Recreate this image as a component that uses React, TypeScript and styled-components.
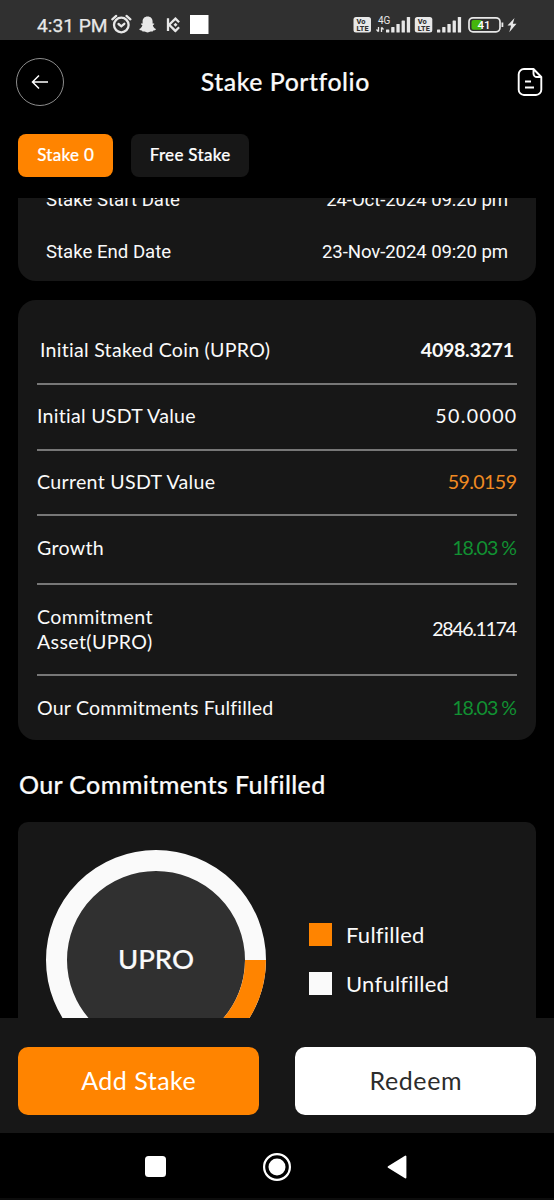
import React from "react";
import styled, { createGlobalStyle } from "styled-components";

const GlobalStyle = createGlobalStyle`
  * { box-sizing: border-box; }
  body { margin: 0; background: #000; }
`;

const geometric = `Lato, "Open Sans", sans-serif`;

const Screen = styled.div`
  width: 554px;
  height: 1200px;
  display: flex;
  flex-direction: column;
  overflow: hidden;
  background: #000;
  color: #fafafa;
  font-family: ${geometric};
`;

const Label = styled.span<{ $size?: number; $weight?: number; $track?: number; $color?: string }>`
  font-size: ${(p) => p.$size ?? 19.6}px;
  font-weight: ${(p) => p.$weight ?? 400};
  letter-spacing: ${(p) => p.$track ?? 0}px;
  margin-right: ${(p) => -Math.min(p.$track ?? 0, 0.6)}px;
  color: ${(p) => p.$color ?? "inherit"};
  -webkit-text-stroke: ${(p) => (p.$weight === 500 ? "0.2px currentColor" : "0")};
  line-height: 25px;
  white-space: pre;
`;

const StatusBar = styled.div`
  flex: none;
  height: 40px;
  padding: 8px 36px 0 37px;
  display: flex;
  align-items: center;
  justify-content: space-between;
  background: #303030;
`;

const StatusGroup = styled.div`
  display: flex;
  align-items: center;
`;

const Clock = styled.span`
  width: 73px;
  font: 400 19.2px/24px Roboto, sans-serif;
  -webkit-text-stroke: 0.25px currentColor;
  color: #e8e8e8;
  white-space: nowrap;
  padding-top: 3px;
`;

const Header = styled.header`
  flex: none;
  height: 84px;
  padding: 0 11px 0 16px;
  display: flex;
  align-items: center;
  justify-content: space-between;
`;

const BackButton = styled.button`
  width: 48px;
  height: 48px;
  padding: 0;
  display: grid;
  place-items: center;
  border: 1px solid #8c8c8c;
  border-radius: 50%;
  background: none;
`;

const Title = styled.h1`
  margin: 0;
  padding: 0 11px 2px 0;
  font-size: 25px;
  line-height: 25px;
`;

const Tabs = styled.nav`
  flex: none;
  height: 74px;
  padding: 10px 18px 0;
  display: flex;
  gap: 18px;
`;

const Tab = styled.button<{ $active?: boolean; $width: number }>`
  width: ${(p) => p.$width}px;
  height: 43px;
  padding: 0 0 2px;
  border: 0;
  border-radius: 8px;
  background: ${(p) => (p.$active ? "#ff8400" : "#171717")};
  color: #fff;
  font-family: inherit;
`;

const ScrollArea = styled.main`
  flex: none;
  height: 820px;
  overflow: hidden;
`;

const Content = styled.div`
  margin-top: -25px;
  padding: 0 18px;
`;

const DateCard = styled.section`
  height: 108px;
  padding: 0 28px;
  border-radius: 0 0 18px 18px;
  background: #171717;
`;

const DateRow = styled.div`
  height: 52px;
  padding-top: 1px;
  display: flex;
  align-items: center;
  justify-content: space-between;
  font: 400 18.6px/24px Roboto, sans-serif;
`;

const DateValue = styled.span`
  letter-spacing: -0.1px;
`;

const SummaryCard = styled.section`
  height: 440px;
  margin-top: 19px;
  padding: 18px 19px 0;
  border-radius: 18px;
  background: #171717;
`;

const SummaryRow = styled.div<{ $height: number; $inset?: boolean; $last?: boolean; $lift?: number }>`
  height: ${(p) => p.$height}px;
  padding: 0 ${(p) => (p.$inset ? 3 : 0)}px ${(p) => p.$lift ?? 2}px;
  display: flex;
  align-items: center;
  justify-content: space-between;
  border-bottom: ${(p) => (p.$last ? "0" : "2px solid #777")};
`;

const SectionTitle = styled.h2`
  margin: 32px 0 25px 1px;
  font-size: 25px;
  line-height: 25px;
  height: 25px;
`;

const ChartCard = styled.section`
  height: 276px;
  padding: 28px;
  display: flex;
  gap: 43px;
  border-radius: 10px;
  background: #171717;
`;

const Donut = styled.div`
  width: 220px;
  height: 220px;
  display: grid;
  place-items: center;
  > * { grid-area: 1 / 1; }
`;

const DonutName = styled.div`
  padding-bottom: 3px;
`;

const Legend = styled.div`
  padding-top: 72px;
  display: flex;
  flex-direction: column;
  gap: 24px;
`;

const LegendItem = styled.div`
  height: 25px;
  display: flex;
  align-items: center;
  gap: 14px;
`;

const Swatch = styled.i<{ $color: string }>`
  width: 23px;
  height: 23px;
  background: ${(p) => p.$color};
`;

const ActionBar = styled.div`
  flex: none;
  height: 115px;
  padding: 29px 18px 0;
  display: flex;
  gap: 36px;
  background: #171717;
`;

const Action = styled.button<{ $light?: boolean }>`
  flex: 1;
  height: 68px;
  padding: 0 0 1px;
  border: 0;
  border-radius: 10px;
  font-family: inherit;
  background: ${(p) => (p.$light ? "#fff" : "#ff8400")};
  color: ${(p) => (p.$light ? "#2c2c2c" : "#fff")};
`;

const SystemNav = styled.div`
  flex: 1;
  padding: 2px 147px 0 145px;
  display: flex;
  align-items: center;
  justify-content: space-between;
  border-bottom: 2px solid #0c0c0c;
`;

const LeftStatusIcons = () => (
  <svg width="100" height="32" viewBox="110 8 100 32" fill="none">
    <g stroke="#e8e8e8" strokeWidth="2.300" strokeLinecap="round">
      <circle cx="121.300" cy="25" r="7.300" />
      <path d="M118.500 24l2.800 2.300 3-2.500M112.300 19.300l3.900-3.400M130.400 19.300l-3.900-3.400" />
    </g>
    <path
      fill="#e8e8e8"
      d="M147.600 16.600c3.300 0 5 2.300 5 5v2l1.500-.2c.5.600 0 1.100-1.300 1.800.5 2 1.500 3 3.200 3.800-.2 1-1.400 1.400-2.800 1.600l-.5 1-2-.1c-1.200.1-1.700 1-3.100 1s-1.900-.9-3.100-1l-2 .1-.5-1c-1.400-.2-2.600-.6-2.800-1.600 1.700-.8 2.700-1.800 3.200-3.800-1.300-.7-1.800-1.200-1.300-1.800l1.500.2v-2c0-2.700 1.700-5 5-5z"
    />
    <g stroke="#e8e8e8" strokeWidth="2.300">
      <path d="M168 18.300v12.800M175.500 18.500l-6.300 6.300 6.300 6.300M172.300 21.700l3.200-3 3.600 3.600M172.300 27.900l3.200 3 3.600-3.600" />
    </g>
    <path fill="#e8e8e8" d="M175.500 22.800l2 2-2 2-2-2z" />
    <path fill="#fff" d="M190 15h18.500v19h-18.500z" />
  </svg>
);

const iconFont = { fontFamily: "Roboto, sans-serif" };

const VoLte = ({ x }: { x: number }) => (
  <g>
    <rect x={x} y="17" width="17.500" height="15.500" rx="2.500" fill="#e8e8e8" />
    <g fill="#303030" fontWeight="800" {...iconFont}>
      <text x={x + 3} y="24.300" fontSize="7.500">Vo</text>
      <text x={x + 3} y="31.300" fontSize="7.300" textLength="12">LTE</text>
    </g>
  </g>
);

const Signal = ({ x }: { x: number }) => (
  <g fill="#e8e8e8">
    {[3, 5.5, 8.5, 12, 15.5].map((h, i) => (
      <rect key={h} x={x + i * 5.2} y={32.5 - h} width="3.300" height={h} rx="0.600" />
    ))}
  </g>
);

const RightStatusIcons = () => (
  <svg width="165" height="32" viewBox="353 8 165 32">
    <VoLte x={353.5} />
    <text x="378" y="23.500" fontSize="10" fill="#e8e8e8" {...iconFont}>4G</text>
    <path d="M378.500 27v4.500M376.500 29.500l2 2.200M381.500 32v-4.500M383.500 29.500l-2-2.200" stroke="#e8e8e8" strokeWidth="1.300" fill="none" />
    <Signal x={386} />
    <VoLte x={414.8} />
    <Signal x={437} />
    <rect x="469" y="17.800" width="31" height="14" rx="4" fill="none" stroke="#e8e8e8" strokeWidth="1.700" />
    <path d="M473.500 20h8v9.800h-8a2 2 0 0 1-2-2V22a2 2 0 0 1 2-2z" fill="#45b50c" />
    <path d="M501.500 22.500h1.800v4.500h-1.800z" fill="#e8e8e8" />
    <text x="484" y="28.900" fontSize="11.500" fontWeight="500" textAnchor="middle" fill="#fff" {...iconFont}>41</text>
    <path d="M514.500 18l-7 7.500h3.600l-1.800 6.800 7.200-8.600h-3.700z" fill="#e8e8e8" />
  </svg>
);

const rows = [
  { label: "Initial Staked Coin (UPRO)", lt: 0.26, value: "4098.3271", vt: -0.3, weight: 700, height: 67, inset: true },
  { label: "Initial USDT Value", lt: 0.26, value: "50.0000", vt: 1.35, height: 66, lift: 3 },
  { label: "Current USDT Value", lt: 0.3, value: "59.0159", vt: -0.6, color: "#ef8a22", height: 65 },
  { label: "Growth", lt: 0.3, value: "18.03 %", vt: -1, color: "#119132", height: 69, lift: 5 },
  { label: "Commitment\nAsset(UPRO)", lt: 0.36, value: "2846.1174", vt: -1.35, height: 91 },
  { label: "Our Commitments Fulfilled", lt: 0.18, value: "18.03 %", vt: -1, color: "#119132", height: 63, lift: 0 },
];

export default function App() {
  return (
    <Screen>
      <GlobalStyle />
      <StatusBar>
        <StatusGroup>
          <Clock>4:31 PM</Clock>
          <LeftStatusIcons />
        </StatusGroup>
        <RightStatusIcons />
      </StatusBar>
      <Header>
        <BackButton aria-label="Back">
          <svg width="18" height="16" viewBox="0 0 18 16" fill="none" stroke="#fff" strokeWidth="1.500">
            <path d="M17 8H1.500M8 1.500L1.500 8 8 14.500" />
          </svg>
        </BackButton>
        <Title>
          <Label $size={24.8} $weight={500} $track={0.55}>Stake Portfolio</Label>
        </Title>
        <svg width="26" height="30" viewBox="0 0 26 30" fill="none" stroke="#fff" strokeWidth="1.900" strokeLinejoin="round">
          <path d="M16.500 2H7a5.300 5.300 0 0 0-5.300 5.300v15.400A5.300 5.300 0 0 0 7 28h12a5.300 5.300 0 0 0 5.300-5.300V10zM16.500 2v4.500A3.500 3.500 0 0 0 20 10h4.300M8 14.500h6M8 20.500h9" />
        </svg>
      </Header>
      <Tabs>
        <Tab $active $width={95}>
          <Label $size={17} $weight={500} $track={0.3}>Stake 0</Label>
        </Tab>
        <Tab $width={118}>
          <Label $size={17} $weight={500} $track={0.3}>Free Stake</Label>
        </Tab>
      </Tabs>
      <ScrollArea>
        <Content>
          <DateCard>
            <DateRow>
              <span>Stake Start Date</span>
              <DateValue>24-Oct-2024 09:20 pm</DateValue>
            </DateRow>
            <DateRow>
              <span>Stake End Date</span>
              <DateValue>23-Nov-2024 09:20 pm</DateValue>
            </DateRow>
          </DateCard>
          <SummaryCard>
            {rows.map((r, i) => (
              <SummaryRow
                key={r.label}
                $height={r.height}
                $inset={r.inset}
                $lift={r.lift}
                $last={i === rows.length - 1}
              >
                <Label $track={r.lt}>{r.label}</Label>
                <Label $track={r.vt} $weight={r.weight} $color={r.color}>{r.value}</Label>
              </SummaryRow>
            ))}
          </SummaryCard>
          <SectionTitle>
            <Label $size={25} $weight={500} $track={0.38}>Our Commitments Fulfilled</Label>
          </SectionTitle>
          <ChartCard>
            <Donut>
              <svg width="220" height="220" viewBox="-110 -110 220 220">
                <circle r="99.500" fill="#303030" stroke="#fafafa" strokeWidth="21" />
                <path d="M99.500 0A99.500 99.500 0 0 1 42.160 90.130" fill="none" stroke="#ff8400" strokeWidth="21" />
              </svg>
              <DonutName>
                <Label $size={27.5} $weight={500}>UPRO</Label>
              </DonutName>
            </Donut>
            <Legend>
              <LegendItem>
                <Swatch $color="#ff8400" />
                <Label $size={22} $track={0.25}>Fulfilled</Label>
              </LegendItem>
              <LegendItem>
                <Swatch $color="#fafafa" />
                <Label $size={22} $track={0.25}>Unfulfilled</Label>
              </LegendItem>
            </Legend>
          </ChartCard>
        </Content>
      </ScrollArea>
      <ActionBar>
        <Action>
          <Label $size={25} $track={0.5}>Add Stake</Label>
        </Action>
        <Action $light>
          <Label $size={25} $track={0.6}>Redeem</Label>
        </Action>
      </ActionBar>
      <SystemNav>
        <svg width="21" height="21">
          <rect width="21" height="21" rx="3.500" fill="#fff" />
        </svg>
        <svg width="28" height="28" viewBox="-14 -14 28 28">
          <circle r="12.900" fill="none" stroke="#fff" strokeWidth="2.200" />
          <circle r="8.500" fill="#fff" />
        </svg>
        <svg width="20" height="24" viewBox="0 0 20 24">
          <path d="M1.500 12L18.500 1.500v21z" fill="#fff" stroke="#fff" strokeWidth="1.800" strokeLinejoin="round" />
        </svg>
      </SystemNav>
    </Screen>
  );
}
